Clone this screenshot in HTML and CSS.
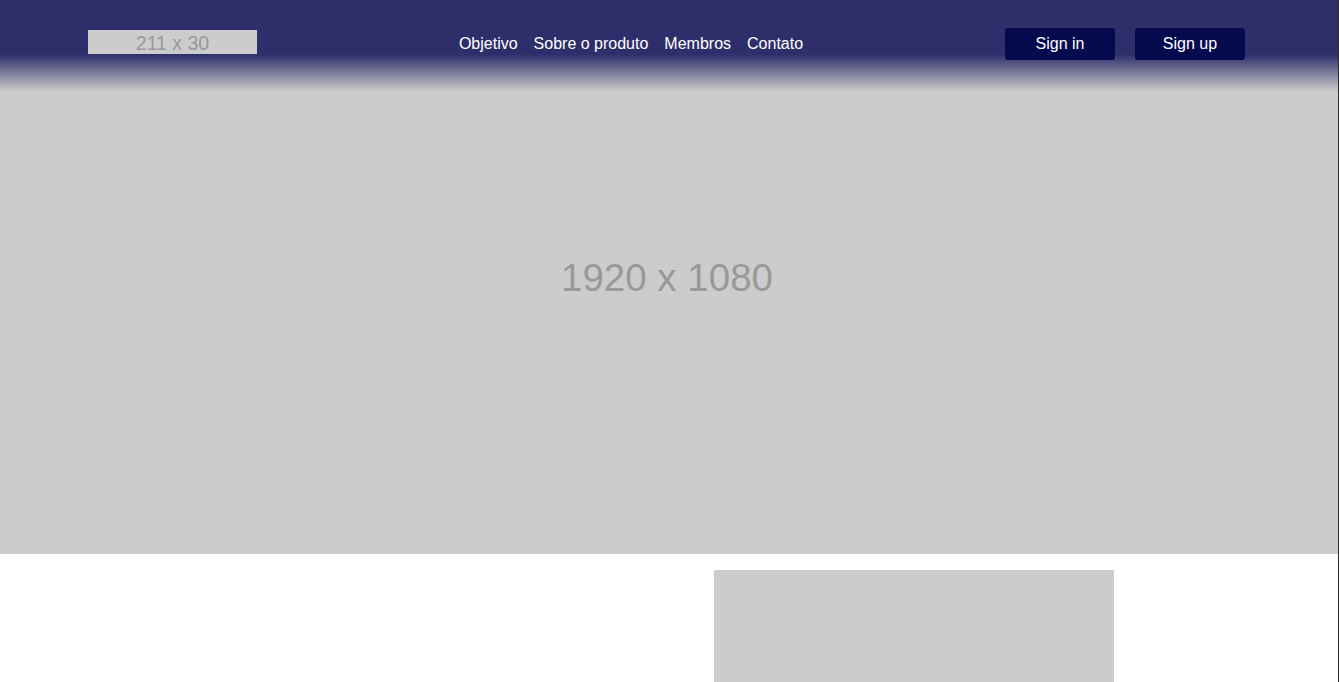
FILE: index.html
```html
<!DOCTYPE html>
<html lang="pt">
<head>
<meta charset="utf-8">
<title>Produto</title>
<link rel="stylesheet" href="styles.css">
</head>
<body>
<div class="page">
  <header class="topbar">
    <div class="logo">211 x 30</div>
    <nav class="menu">
      <a href="#">Objetivo</a>
      <a href="#">Sobre o produto</a>
      <a href="#">Membros</a>
      <a href="#">Contato</a>
    </nav>
    <div class="actions">
      <button class="btn">Sign in</button>
      <button class="btn">Sign up</button>
    </div>
  </header>
  <section class="hero">1920 x 1080</section>
  <section class="about">
    <div class="about-text"></div>
    <div class="about-img"></div>
  </section>
</div>
</body>
</html>
```

FILE: styles.css
```css
html {
  background: #2b2b2b;
}
body {
  margin: 0;
  width: 1338px;
  background: #fff;
  font-family: "Liberation Sans", Arial, sans-serif;
  min-height: 700px;
}
.page {
  position: relative;
}
.topbar {
  position: absolute;
  top: 0;
  left: 0;
  right: 0;
  height: 92px;
  box-sizing: border-box;
  padding: 28px 93px 0 88px;
  display: flex;
  justify-content: space-between;
  align-items: flex-start;
  background: linear-gradient(to bottom, #2e2f6a 0%, #2e2f6a 59%, rgba(46, 47, 106, 0) 100%);
}
.logo {
  margin-top: 2px;
  width: 169px;
  height: 24px;
  background: #cccccc;
  color: #999999;
  font-size: 19.5px;
  line-height: 26px;
  text-align: center;
}
.menu {
  display: flex;
  gap: 16px;
  margin-top: 6px;
}
.menu a {
  color: #ffffff;
  text-decoration: none;
  font-size: 16px;
  line-height: 20px;
}
.actions {
  display: flex;
  gap: 20px;
}
.btn {
  width: 110px;
  height: 32px;
  border: 0;
  border-radius: 3px;
  background: #050a4f;
  color: #ffffff;
  font-family: "Liberation Sans", Arial, sans-serif;
  font-size: 16px;
  padding: 0;
  cursor: pointer;
}
.hero {
  height: 554px;
  box-sizing: border-box;
  padding-right: 4px;
  padding-top: 2px;
  background: #cccccc;
  color: #999999;
  font-size: 38.5px;
  display: flex;
  align-items: center;
  justify-content: center;
}
.about {
  display: flex;
  padding-top: 16px;
}
.about-text {
  width: 714px;
}
.about-img {
  width: 400px;
  height: 300px;
  background: #cccccc;
}
```
